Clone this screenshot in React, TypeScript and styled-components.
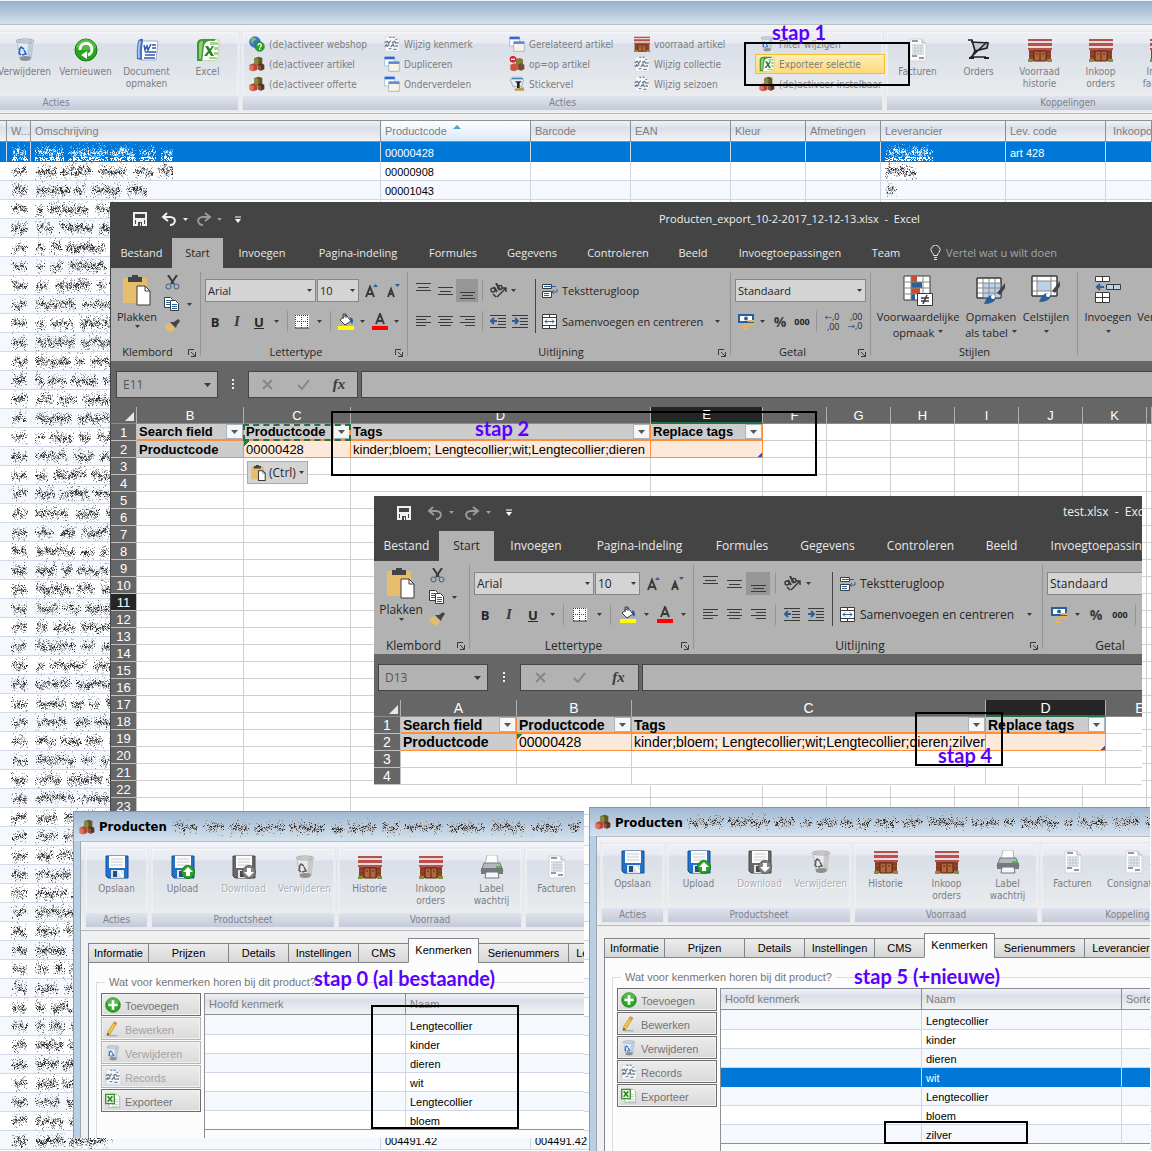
import React from 'react';
import styled, { createGlobalStyle, css } from 'styled-components';

const ui = `"Liberation Sans", Arial, sans-serif`;
const tahoma = `"DejaVu Sans Condensed", "DejaVu Sans", Tahoma, sans-serif`;
const segoe = `"Open Sans", "Segoe UI", sans-serif`;
const ink = '#3a3a3a';
const blue = '#2a6099';

const Global = createGlobalStyle`
  * { box-sizing: border-box; }
  body { margin: 0; background: #fff; font-family: ${ui}; font-size: 11px; }
  button, input, select { font: inherit; color: inherit; margin: 0; padding: 0; border: 0; background: none; border-radius: 0; }
  svg { display: block; flex: none; }
  table { border-collapse: separate; border-spacing: 0; table-layout: fixed; }
  th { text-align: left; font-weight: inherit; }
  td, th { padding: 0; }
`;

/* ---------- smudged-out text ---------- */

function random(seed: number) {
  let a = seed * 7919 + 13;
  return () => {
    a = (a + 0x6d2b79f5) | 0;
    let t = Math.imul(a ^ (a >>> 15), 1 | a);
    t = (t + Math.imul(t ^ (t >>> 7), 61 | t)) ^ t;
    return ((t ^ (t >>> 14)) >>> 0) / 4294967296;
  };
}

const tones = {
  dark: ['#333333', '#868686', '#c0c4ca'],
  light: ['#ffffff', '#9fd0f5', '#4fa3e6'],
};

interface SmudgeProps { w: number; h: number; seed: number; tone?: 'dark' | 'light'; loose?: number; single?: boolean }

function Smudge({ w, h, seed, tone = 'dark', loose = 0, single }: SmudgeProps) {
  const r = random(seed);
  const paths = ['', '', ''];
  let x = 0;
  while (x < w) {
    const word = single ? w : 10 + Math.floor(r() * 34);
    const tall = 4 + r();
    let lift = 0;
    for (let i = 0; i < word && x < w; i++, x++) {
      if (i % 3 === 0) lift = (r() - 0.5) * 4;
      const edge = Math.min(i + 1, word - i, 4) / 4;
      for (let y = 0; y < h; y++) {
        const d = Math.abs(y - h / 2 + lift) / tall;
        const fringe = tone === 'light' && y > h - 5 ? 0.4 : 0;
        const p = 0.72 * edge * Math.exp(-d * d * 1.1) + loose + fringe;
        if (r() < p) {
          const k = r() + d * 0.35;
          const level = fringe ? 0 : k < 0.4 ? 0 : k < 0.8 ? 1 : 2;
          paths[level] += `M${x} ${y}h1v1h-1z`;
        }
      }
    }
    x += 2 + Math.floor(r() * 4);
  }
  return (
    <svg width={w} height={h} viewBox={`0 0 ${w} ${h}`} shapeRendering="crispEdges" aria-hidden="true">
      {paths.map((d, i) => <path key={i} d={d} fill={tones[tone][i]} />)}
    </svg>
  );
}

/* ---------- icons of the product program ---------- */

type Art = { size?: number; faded?: boolean };
const Pic = ({ size = 24, faded, children }: Art & { children: React.ReactNode }) => (
  <svg width={size} height={size} viewBox="0 0 24 24" aria-hidden="true" filter={faded ? 'grayscale(1)' : undefined}>{children}</svg>
);

const Bin = (p: Art) => (
  <Pic {...p}>
    <path d="M4 3L7 21Q12 24 18 21L20 3Z" fill="#e3ebf4" stroke="#b3bfcc" />
    <path d="M15 5L14 21Q17 21 18 20L20 5Z" fill="#bccbdc" />
    <path d="M7 19Q12 17 18 19L17 22Q12 24 7 22Z" fill="#8d9094" />
    <ellipse cx="12" cy="3" rx="9" ry="2" fill="#f4f8fc" stroke="#9aa6b3" />
    <path d="M5 3h14" stroke="#8798a8" />
    <path d="M6 12l2-3 3 2M11 12l2 4-4 1M8 17l-2-2 1-3" fill="none" stroke="#2463c9" strokeWidth="1.6" />
  </Pic>
);
const Refresh = (p: Art) => (
  <Pic {...p}>
    <circle cx="12" cy="12" r="11" fill="#27a51c" stroke="#127a0d" />
    <path d="M2 10A10 9 0 0 1 22 10Q12 14 2 10Z" fill="#6fd05f" opacity=".6" />
    <path d="M6 12A6 6 0 1 1 14 17" fill="none" stroke="#fff" strokeWidth="3" />
    <path d="M13 13v8l-6-4z" fill="#fff" />
  </Pic>
);
const Word = (p: Art) => (
  <Pic {...p}>
    <path d="M7 3L23 3L21 22L6 22Z" fill="#fff" stroke="#9db0cf" />
    <path d="M3 3Q1 12 2 21L7 22Q6 12 8 1Q5 0 3 3Z" fill="#3d6cc0" />
    <path d="M5 3Q3 12 4 20" stroke="#a8c4f0" strokeWidth="2" fill="none" />
    <path d="M9 7l1 5 2-4 1 4 3-6" fill="none" stroke="#2b57ab" strokeWidth="1.5" />
    <path d="M17 7h4M17 10h4M10 14h11M10 17h10M9 20h11" stroke="#2d59ad" strokeWidth="1.4" />
  </Pic>
);
const Xl = (p: Art) => (
  <Pic {...p}>
    <path d="M7 2L23 2L22 22L6 23Z" fill="#fff" stroke="#b9d7ad" />
    <path d="M14 4h8v3h-8zM18 9h4v3h-4zM18 14h4v3h-4zM13 19h8v2h-8z" fill="#a5d58e" />
    <path d="M1 5Q2 1 6 1L20 1L18 3Q9 2 8 8L6 23L1 23Z" fill="#3f9a31" />
    <path d="M3 7Q3 3 7 3L5 21L3 21Z" fill="#8fd07b" />
    <path d="M9 8h3l2 3 2-3h2l-3 5 3 5h-3l-2-3-2 3h-3l4-5z" fill="#2d8427" />
  </Pic>
);
const XlPage = (p: Art) => (
  <Pic {...p}>
    <path d="M6 2h12l4 4v16H6z" fill="#fff" stroke="#8aa08a" />
    <path d="M14 10h6M14 13h6M10 17h10M10 20h10" stroke="#9bb79b" />
    <path d="M1 2h13v14H1z" fill="#e6f4e0" stroke="#3c9134" strokeWidth="2" />
    <path d="M4 5l7 8M11 5l-7 8" stroke="#2c8326" strokeWidth="2.4" />
  </Pic>
);
const Globe = (p: Art) => (
  <Pic {...p}>
    <circle cx="9" cy="9" r="8" fill="#3a79c8" stroke="#2a5b99" />
    <path d="M4 3Q9 1 11 5L7 8L5 12Q1 9 4 3ZM12 9l4 1-2 4-3-2z" fill="#7db97a" />
    <circle cx="16" cy="16" r="7" fill="#2ba329" stroke="#167a14" />
    <path d="M13.500 14Q14 11.500 16 11.500T18.500 14Q18 16 16 17M16 18.500v2" fill="none" stroke="#fff" strokeWidth="2" />
  </Pic>
);
const Blocks = (p: Art) => (
  <Pic {...p}>
    <path d="M8 3l7-2 5 2v9l-7 2-5-2z" fill="#5f5a26" />
    <path d="M8 3l6 1v9l-6-1z" fill="#8f8740" />
    <path d="M1 13l6-2 5 2v8l-6 2-5-2z" fill="#b54835" />
    <path d="M1 13l6 2v7l-6-1z" fill="#e0735c" />
    <path d="M13 13l5-2 5 2v7l-5 2-5-2z" fill="#5d3222" />
    <path d="M13 13l5 2v7l-5-2z" fill="#85533b" />
  </Pic>
);
const StopBlocks = (p: Art) => (
  <Pic {...p}>
    <path d="M10 4l6-1 5 2v8l-6 2-5-2z" fill="#857c38" />
    <path d="M2 13l6-2 5 2v8l-6 2-5-2z" fill="#c9543e" />
    <path d="M13 13l5-2 5 2v7l-5 2-5-2z" fill="#7a4a34" />
    <circle cx="6" cy="5" r="5" fill="#d8202a" />
    <path d="M3 5h6" stroke="#fff" strokeWidth="2" />
  </Pic>
);
const Scribble = (p: Art) => (
  <Pic {...p}>
    <path d="M2 1h17l4 4v18H2z" fill="#f7f9fb" stroke="#d4d8dd" />
    <path d="M8 2h3M13 2h3M17 5h3M7 19h4M14 20h5" stroke="#6c87a8" strokeWidth="2" />
    <path d="M1 10l4-2 2 3 3-4M12 10l4-2 2 3 4-1M1 15h4l3-2M10 16l3-3 3 3M17 15h4M4 12v2M14 11v2" fill="none" stroke="#6e7d92" strokeWidth="2" />
  </Pic>
);
const Windows = (p: Art) => (
  <Pic {...p}>
    <path d="M1 2h15v13H1z" fill="#fff" stroke="#8aa7d6" />
    <path d="M1 1h15v4H1z" fill="#2f66d2" />
    <path d="M7 9h16v14H7z" fill="#f7f3e4" stroke="#8fa3bf" />
    <path d="M7 8h16v4H7z" fill="#5f8ddc" />
  </Pic>
);
const Sticker = (p: Art) => (
  <Pic {...p}>
    <path d="M2 6L5 2H19L22 6L19 16H6Z" fill="#e8ecf0" stroke="#7f98ad" />
    <path d="M4 4h17" stroke="#4b87b8" strokeWidth="2" />
    <path d="M9 8h10l-3 3v7h-4v-7z" fill="#262626" />
    <path d="M8 19l14-2 1 5H9z" fill="#c39a4a" />
  </Pic>
);
const Store = (p: Art) => (
  <Pic {...p}>
    <path d="M1 9h22v14H1z" fill="#93452c" />
    <path d="M1 14h22M1 18h22" stroke="#7a3521" />
    <path d="M0 1h24v10H0z" fill="#e6dbda" />
    <path d="M0 1h24v2H0zM0 5h24v3H0zM0 10h24v2H0z" fill="#b8504d" />
    <path d="M6 13h12v10H6z" fill="#b1683c" stroke="#5a2514" />
    <path d="M12 13v10M9 15v2M15 15v2" stroke="#5a2514" />
    <path d="M0 21h5v3H0zM19 21h5v3h-5z" fill="#84903c" />
  </Pic>
);
const Page = (p: Art) => (
  <Pic {...p}>
    <path d="M4 1h12l4 4v18H4z" fill="#fdfdfd" stroke="#cfd3d8" />
    <path d="M16 1v4h4" fill="#dfe3e8" stroke="#b5bac0" />
    <path d="M6 3h6M6 18h5M13 20h5" stroke="#777" strokeWidth="1.500" />
    <path d="M6 7h12v9H6z" fill="#e9eef2" />
    <path d="M6 7h12M6 10h12M6 13h12M6 16h12M9 7v9M12 7v9M15 7v9" stroke="#bcc7cf" />
  </Pic>
);
const Cart = (p: Art) => (
  <Pic {...p}>
    <path d="M4 4l16 1v5L8 13z" fill="#c4c8d0" />
    <path d="M1 2h4l3 11M4 4l17 1-1 5L8 13l-3 6h14M20 4L3 20" fill="none" stroke="#222" strokeWidth="1.700" />
    <path d="M2 20h5M17 20h5" stroke="#222" strokeWidth="2" />
  </Pic>
);
const Disk = ({ badge, ...p }: Art & { badge?: 'up' | 'down' }) => (
  <Pic {...p}>
    <path d="M1 1h22v22H3l-2-2z" fill="#2471c8" stroke="#164f96" />
    <path d="M4 1h16v12H4z" fill="#fbfbfb" /><path d="M6 4h12M6 7h12M6 10h12" stroke="#c8ccd2" />
    <path d="M6 15h13v8H6z" fill="#dfe3e8" /><path d="M8 16h4v6H8z" fill="#1f4f87" /><path d="M14 16l4 6" stroke="#fff" strokeWidth="2" />
    {badge && <circle cx="17" cy="17" r="6.500" fill="#2ba329" stroke="#177c15" />}
    {badge === 'up' && <path d="M17 12l5 5h-3v4h-4v-4h-3z" fill="#fff" />}
    {badge === 'down' && <path d="M17 22l5-5h-3v-4h-4v4h-3z" fill="#fff" />}
  </Pic>
);
const Printer = (p: Art) => (
  <Pic {...p}>
    <path d="M7 0h10l1 9H5z" fill="#fdfdfd" stroke="#b4b7ba" />
    <path d="M4 8h16l3 8H1z" fill="#b4b9bf" stroke="#75797d" /><path d="M1 13h22v6H1z" fill="#737980" />
    <path d="M16 12h5" stroke="#57b54c" strokeWidth="2" />
    <path d="M6 17h12l1 6H5z" fill="#f5f6f7" stroke="#777" />
  </Pic>
);
const Plus = (p: Art) => (
  <Pic {...p}>
    <circle cx="12" cy="12" r="11" fill="#2ca526" stroke="#16770f" />
    <path d="M3 9A9 8 0 0 1 21 9Q12 13 3 9Z" fill="#7cd070" opacity=".5" />
    <path d="M12 5v14M5 12h14" stroke="#fff" strokeWidth="4" />
  </Pic>
);
const Pencil = (p: Art) => (
  <Pic {...p}>
    <path d="M5 22h14" stroke="#a9adb3" strokeWidth="2" />
    <path d="M14 1l4 2L8 19l-5 3 1-6z" fill="#f2c83e" stroke="#b88a2c" />
    <path d="M14 1l4 2-2 3-4-2z" fill="#d98878" /><path d="M3 22l1-4 3 2z" fill="#4a4a4a" />
  </Pic>
);

/* ---------- icons of the spreadsheet ---------- */

const Glyph = ({ w = 16, h = 16, box, children }: { w?: number; h?: number; box?: string; children: React.ReactNode }) => (
  <svg width={w} height={h} viewBox={box || `0 0 ${w} ${h}`} aria-hidden="true" fill="none" stroke={ink}>{children}</svg>
);
const Caret = ({ color = ink }: { color?: string }) => (
  <Glyph w={5} h={3}><path d="M0 0h5L2.500 3z" fill={color} stroke="none" /></Glyph>
);
const SaveIcon = () => <Glyph w={14} h={14}><path d="M1 1h12v12H1zM1 7h12" stroke="#f0f0f0" strokeWidth="2" /><path d="M3 8h8v6H3z" fill="#f0f0f0" stroke="none" /><path d="M5 10h4v4H5z" fill="#444" stroke="none" /><path d="M7 11h1v3H7z" fill="#f0f0f0" stroke="none" /></Glyph>;
const Undo = ({ color }: { color: string }) => <Glyph w={16} h={14}><path d="M6 1L2 5l5 4M2 5h7c7 0 6 8 0 8" stroke={color} strokeWidth="2" /></Glyph>;
const Redo = () => <Glyph w={16} h={14}><path d="M9 1l5 4-5 4M14 5H7c-7 0-6 8 0 8" stroke="#9a9a9a" strokeWidth="2" /></Glyph>;
const More = () => <Glyph w={6} h={7}><path d="M0 1h6" stroke="#fff" /><path d="M0 3h6L3 7z" fill="#fff" stroke="none" /></Glyph>;
const Paste = ({ small }: { small?: boolean }) => (
  <Glyph w={small ? 15 : 28} h={small ? 16 : 31} box="0 0 28 31">
    <path d="M0 3h24v25H0z" fill="#e6bd6c" stroke="none" /><path d="M5 2h4V0h6v2h4v5H5z" fill="#444" stroke="none" />
    <path d="M14 11h8l5 5v14H14z" fill="#fff" strokeWidth={small ? 2 : 1} /><path d="M22 11v5h5" />
  </Glyph>
);
const Scissors = () => <Glyph w={15} h={15}><path d="M3 0l6 9M12 0L6 9" strokeWidth="2" /><circle cx="3.500" cy="11.500" r="2.500" stroke={blue} /><circle cx="11.500" cy="11.500" r="2.500" stroke={blue} /></Glyph>;
const Copy = () => <Glyph w={16} h={14}><path d="M.5 .5h6l2 2v8h-8z" fill="#fff" /><path d="M6.500 3.500h5l3 3v7h-8z" fill="#fff" /><path d="M2 3.500h4M2 5.500h4M2 7.500h4M8 7.500h5M8 9.500h5M8 11.500h5" stroke={blue} /></Glyph>;
const Brush = () => <Glyph w={16} h={14}><path d="M0 7l5-3 6 6-5 4z" fill="#e6bd6c" stroke="none" /><path d="M6 3l6 6 1-3 3-4-2-2-4 3z" fill="#444" stroke="none" /></Glyph>;
const GrowA = ({ down }: { down?: boolean }) => (
  <Glyph w={13} h={14}><path d={down ? 'M1 13l3-8 3 8M2 10h4' : 'M1 13L5 3l4 10M2 10h6'} strokeWidth="2" /><path d={down ? 'M8 0h5l-2.500 3z' : 'M8 3h5L10.500 0z'} fill={blue} stroke="none" /></Glyph>
);
const Borders = () => <Glyph w={14} h={14}><path d="M0 0h14v13H0z" fill="#fff" stroke="none" /><path d="M0 .5h14M0 6.500h14M.5 0v13M6.500 0v13M12.500 0v13" strokeDasharray="1 1" /><path d="M0 13h14" /></Glyph>;
const Fill = () => <Glyph w={17} h={17}><path d="M3 7l6-5 5 6-6 4z" fill="#fff" /><path d="M6 6V1h3v4" /><path d="M13 4q5 2 2 7l-2-3z" fill={blue} stroke="none" /><path d="M1 13h16v4H1z" fill="#ff0" stroke="none" /></Glyph>;
const FontColor = () => <Glyph w={17} h={17}><path d="M5 11l4-10 4 10M6 8h6" strokeWidth="2" /><path d="M1 13h16v4H1z" fill="#f00" stroke="none" /></Glyph>;
const Lines = ({ kind }: { kind: 'top' | 'mid' | 'low' | 'left' | 'center' | 'right' }) => {
  const d = {
    top: 'M0 .5h15M2 4.500h11M0 7.500h15', mid: 'M0 4.500h15M2 8.500h11M0 11.500h15', low: 'M0 9.500h15M2 12.500h11M0 15.500h15',
    left: 'M0 2.500h15M0 5.500h10M0 8.500h15M0 11.500h10', center: 'M0 2.500h15M2 5.500h11M0 8.500h15M2 11.500h11', right: 'M0 2.500h15M5 5.500h10M0 8.500h15M5 11.500h10',
  }[kind];
  return <Glyph w={15} h={16}><path d={d} /></Glyph>;
};
const Orient = () => <Glyph w={17} h={15}><circle cx="3" cy="7" r="2" strokeWidth="1.500" /><path d="M4 4l3 5M6 0l4 7" strokeWidth="2" /><circle cx="10" cy="4.500" r="2" strokeWidth="1.500" /><path d="M7 14l9-9M12 5h4v4M3 11l3 3" strokeWidth="1.500" /></Glyph>;
const Indent = ({ back }: { back?: boolean }) => <Glyph w={16} h={14}><path d="M0 .5h16M8 3.500h8M8 6.500h8M8 9.500h8M0 12.500h16" /><path d={back ? 'M4 3L1 6l3 3M1 6h6' : 'M3 3l3 3-3 3M0 6h6'} stroke={blue} strokeWidth="2" /></Glyph>;
const Wrap = () => <Glyph w={16} h={16}><path d="M.5 1.500h9v4h-9zM.5 8.500h9v6h-9z" fill="#fff" /><path d="M2 3.500h12M2 10.500h5M2 12.500h5" stroke={blue} /><path d="M15 6v3h-5M12 7l-2 2 2 2" stroke={blue} /></Glyph>;
const Merge = () => <Glyph w={16} h={15}><path d="M.5 .5h14v14H.5zM.5 3.500h14M.5 11.500h14M7.500 0v3M7.500 12v3" fill="#fff" /><path d="M3 7.500h9M5 5.500l-2 2 2 2M10 5.500l2 2-2 2" stroke={blue} /></Glyph>;
const Money = () => <Glyph w={17} h={16}><path d="M0 0h16v9H0z" fill={blue} stroke="none" /><path d="M2 2h12v5H2z" fill="#fff" stroke="none" /><circle cx="8" cy="4.500" r="2" fill={blue} stroke="none" /><path d="M10 7h6M10 10h6M4 12h7M5 15h5" stroke="#e9b25c" strokeWidth="2" /></Glyph>;
const Launcher = () => <Glyph w={8} h={8}><path d="M.5 6V.5H6M3 3l4 4M7.500 3v4.500H3" /></Glyph>;
const Conditional = () => (
  <Glyph w={30} h={31}><path d="M1 1h26v24H1z" fill="#fff" /><path d="M8 1h6v6H8zM8 13h9v6H8z" fill="#c54f2c" stroke="none" /><path d="M8 7h11v6H8zM8 19h4v6H8z" fill={blue} stroke="none" /><path d="M8 1v24M20 1v24M1 7h26M1 13h26M1 19h26" stroke="#888" /><path d="M14.500 18.500h15v12h-15z" fill="#fff" /><path d="M18 23h8M18 26h8M24 20l-4 9" strokeWidth="1.500" /></Glyph>
);
const PaintBrush = () => <><path d="M29 8l-8 10 3 2 5-7z" fill="#444" stroke="none" /><path d="M8 29q3-9 9-9l3 3q-2 6-12 6z" fill={blue} stroke="none" /><circle cx="17" cy="22" r="2" fill="#fff" stroke="none" /></>;
const FormatTable = () => <Glyph w={30} h={31}><path d="M1 3h24v20H1z" fill="#fff" /><path d="M7 8h18v15H7z" fill="#bdd0ea" stroke="none" /><path d="M7 3v20M13 3v20M19 3v20M1 8h24M1 13h24M1 18h24" stroke="#888" /><path d="M1 3h24v20H1z" /><PaintBrush /></Glyph>;
const CellStyles = () => <Glyph w={30} h={31}><path d="M1 1h25v20H1z" fill="#fff" /><path d="M6 6h14v10H6z" fill="#bdd0ea" stroke="none" /><path d="M6 1v20M20 1v20M1 6h25M1 16h25" stroke="#888" /><path d="M1 1h25v20H1z" /><g transform="translate(0 -2)"><PaintBrush /></g></Glyph>;
const InsertCells = () => <Glyph w={26} h={31}><path d="M.5 1.500h14v5H.5zM7.500 1v5M.5 17.500h14v10H.5zM7.500 17v10M.5 22.500h14" fill="#fff" /><path d="M11.500 9.500h14v5h-14zM18.500 9v5" fill="#bdd0ea" /><path d="M9 12H2M5 9l-3 3 3 3" stroke={blue} strokeWidth="2" /></Glyph>;
const Bulb = () => <Glyph w={11} h={15}><path d="M3.500 10.500q0-2-1.500-3a4.500 4.500 0 1 1 7 0q-1.500 1-1.500 3zM4 12.500h3M4 14.500h3" stroke="#e8e8e8" /></Glyph>;

/* ---------- product ribbon ---------- */

const RibbonBar = styled.div`
  display: flex; gap: 1px; height: 90px; padding: 5px 3px 3px 3px; overflow: hidden;
  border-top: 1px solid #b9bcc2; border-bottom: 1px solid #b4b8be;
  background: linear-gradient(#f3f4f8 0, #e7eaf1 18px, #d9dee8 19px, #e6e9ec 60px, #f1f2f2 88px);
`;
const RibbonGroup = styled.section<{ $w: number; $end?: boolean }>`
  flex: none; width: ${p => p.$w}px; height: 82px; display: flex; flex-direction: column;
  border: 2px solid #e9ebef; box-shadow: inset 0 0 0 1px rgba(255,255,255,.35);
  ${p => p.$end && css`margin-left: -131px; align-items: flex-end;`}
`;
const GroupBody = styled.div`flex: 1; display: flex; min-width: 0;`;
const GroupName = styled.div`
  align-self: stretch; height: 14px; line-height: 14px; text-align: center; color: #7e838c;
  font-family: ${tahoma}; font-size: 10px; background: linear-gradient(#dfe3ee, #c5cad8);
`;
const BigButton = styled.button`
  flex: none; width: 61px; display: flex; flex-direction: column; align-items: center; padding-top: 6px;
  font-family: ${tahoma}; font-size: 10px; line-height: 12px; color: #7c7e82; white-space: pre; gap: 4px;
  &:disabled { color: #adb0b5; text-shadow: 1px 1px #fff; }
`;
const SmallGrid = styled.div`
  display: grid; grid-auto-flow: column; grid-template-rows: repeat(3, 20px);
  grid-template-columns: 135px 125px 125px 125px 130px; padding: 2px 0 0 2px; height: 62px;
`;
const SmallButton = styled.button<{ $hot?: boolean }>`
  display: flex; align-items: center; gap: 4px; padding-left: 3px; white-space: nowrap; width: 130px;
  font-family: ${tahoma}; font-size: 10px; color: #7c7e82; border: 1px solid transparent;
  ${p => p.$hot && css`border-color: #f5bf2e; background: linear-gradient(#ffeeb6, #fdd97a);`}
`;

/* ---------- product program, back window ---------- */

const Desktop = styled.main`position: relative; min-height: 100vh; overflow: hidden; background: #fff;`;
const BackTitle = styled.header`height: 24px; border-top: 1px solid #eef2f6; background: linear-gradient(#96b0ca, #d3e0ed);`;
const Gap = styled.div`height: 6px; background: #f0f0f0;`;
const DataTable = styled.table`
  width: 100%; font-size: 11px; color: #000;
  th { height: 22px; padding-left: 4px; color: #7c7e82; white-space: nowrap; overflow: hidden;
    border: solid #8b8f96; border-width: 1px 1px 1px 0;
    background: linear-gradient(#eef0f5 0, #e3e7ee 5px, #d9dee8 6px, #f1f2f3 100%); }
  td { height: 19px; line-height: 16px; padding: 2px 0 0 4px; overflow: hidden; white-space: nowrap;
    border: solid #cfd7e6; border-width: 0 1px 1px 0; background: #fff; }
  tbody tr:nth-child(odd) td { background: #f5f9fd; }
  tbody tr:first-child td { height: 20px; }
  tbody tr.on td { background: #0078d7; color: #fff; border-bottom-color: #0078d7; }
  svg { max-width: none; }
`;
const StockTable = styled(DataTable)`
  tbody tr:not(.on) td:nth-child(-n+2) { border-right-color: transparent; }
  td:nth-child(-n+3), td:nth-child(9) { padding-top: 0; }
`;
const SortedTh = styled.th`
  && { background: linear-gradient(#fff, #d9e9f7); }
  svg { display: inline-block; vertical-align: 6px; margin-left: 6px; }
`;

const backCols = [7, 24, 350, 150, 100, 100, 75, 75, 125, 100];
const backRows = Array.from({ length: 53 }, (_, i) => i);
const codes: Record<number, string> = { 0: '00000428', 1: '00000908', 2: '00001043', 52: '004491.42' };

function BackWindow() {
  return (
    <>
      <BackTitle />
      <RibbonBar>
        <RibbonGroup $w={368} $end>
          <GroupBody>
            <BigButton><Bin />Verwijderen</BigButton>
            <BigButton><Refresh />Vernieuwen</BigButton>
            <BigButton><Word />{'Document\nopmaken'}</BigButton>
            <BigButton><Xl />Excel</BigButton>
          </GroupBody>
          <GroupName>Acties</GroupName>
        </RibbonGroup>
        <RibbonGroup $w={643}>
          <GroupBody>
            <SmallGrid>
              <SmallButton><Globe size={16} />(de)activeer webshop</SmallButton>
              <SmallButton><Blocks size={16} />(de)activeer artikel</SmallButton>
              <SmallButton><Blocks size={16} />(de)activeer offerte</SmallButton>
              <SmallButton><Scribble size={16} />Wijzig kenmerk</SmallButton>
              <SmallButton><Windows size={16} />Dupliceren</SmallButton>
              <SmallButton><Windows size={16} />Onderverdelen</SmallButton>
              <SmallButton><Windows size={16} />Gerelateerd artikel</SmallButton>
              <SmallButton><StopBlocks size={16} />op=op artikel</SmallButton>
              <SmallButton><Sticker size={16} />Stickervel</SmallButton>
              <SmallButton><Store size={16} />voorraad artikel</SmallButton>
              <SmallButton><Scribble size={16} />Wijzig collectie</SmallButton>
              <SmallButton><Scribble size={16} />Wijzig seizoen</SmallButton>
              <SmallButton><Bin size={16} />Filter wijzigen</SmallButton>
              <SmallButton $hot><Xl size={16} />Exporteer selectie</SmallButton>
              <SmallButton><Blocks size={16} />(de)activeer instelbaar</SmallButton>
            </SmallGrid>
          </GroupBody>
          <GroupName>Acties</GroupName>
        </RibbonGroup>
        <RibbonGroup $w={366}>
          <GroupBody>
            <BigButton><Page />Facturen</BigButton>
            <BigButton><Cart />Orders</BigButton>
            <BigButton><Store />{'Voorraad\nhistorie'}</BigButton>
            <BigButton><Store />{'Inkoop\norders'}</BigButton>
            <BigButton><Store />{'Inkoop\nfacturen'}</BigButton>
          </GroupBody>
          <GroupName>Koppelingen</GroupName>
        </RibbonGroup>
      </RibbonBar>
      <Gap />
      <StockTable>
        <colgroup>{backCols.map((w, i) => <col key={i} width={w} />)}<col /></colgroup>
        <thead>
          <tr>
            <th /><th>W...</th><th>Omschrijving</th>
            <SortedTh>Productcode<Glyph w={8} h={4}><path d="M0 4h8L4 0z" fill="#4aa3c9" stroke="none" /></Glyph></SortedTh>
            <th>Barcode</th><th>EAN</th><th>Kleur</th><th>Afmetingen</th><th>Leverancier</th><th>Lev. code</th><th>&nbsp;Inkooporder</th>
          </tr>
        </thead>
        <tbody>
          {backRows.map(i => (
            <tr key={i} className={i === 0 ? 'on' : undefined}>
              <td />
              <td><Smudge w={17} h={18} seed={i + 300} tone={i ? 'dark' : 'light'} loose={0.03} single /></td>
              <td><Smudge w={i < 2 ? 138 : i < 3 ? 112 : 78} h={18} seed={i + 1} tone={i ? 'dark' : 'light'} loose={0.05} /></td>
              <td>{codes[i]}</td>
              <td>{i === 52 ? codes[i] : ''}</td>
              <td /><td /><td />
              <td>{i < 3 && <Smudge w={i === 0 ? 48 : i === 1 ? 32 : 12} h={18} seed={i + 90} tone={i ? 'dark' : 'light'} loose={0.04} single />}</td>
              <td>{i === 0 ? 'art 428' : ''}</td>
              <td />
            </tr>
          ))}
        </tbody>
      </StockTable>
    </>
  );
}

/* ---------- spreadsheet window ---------- */

type Wide = { $wide?: boolean };
const grow = (n: number, wide?: boolean) => Math.round(wide ? n * 1.08 : n);

const SheetWindow = styled.section<Wide>`
  position: absolute; overflow: hidden; background: #fff; color: #262626;
  font-family: ${segoe}; font-size: ${p => (p.$wide ? 12 : 11)}px; white-space: nowrap;
  ${p => p.$wide
    ? css`left: 374px; top: 496px; width: 768px; height: 290px;`
    : css`left: 110px; top: 202px; right: 0; border-left: 1px solid #444;`}
`;
const SheetTitle = styled.header<Wide>`
  display: flex; align-items: center; height: ${p => (p.$wide ? 35 : 36)}px; padding: 0 0 2px 22px; background: #444; color: #f0f0f0;
  > span { margin-bottom: 2px; }
`;
const Slot = styled.div<{ $w: number }>`
  flex: none; width: ${p => p.$w}px; display: flex; align-items: center; justify-content: center;
`;
const IconSlot = styled.button<{ $w: number; $on?: boolean }>`
  flex: none; width: ${p => p.$w}px; display: flex; align-items: center; justify-content: center;
  height: 23px; font-size: 13px; ${p => p.$on && css`background: #969696;`}
`;
const MenuTabs = styled.nav`display: flex; height: 30px; background: #444; color: #e8e8e8;`;
const MenuTab = styled.button<{ $w: number; $on?: boolean }>`
  flex: none; width: ${p => p.$w}px; height: 30px; padding-bottom: 2px;
  ${p => p.$on && css`background: #b2b2b2; color: #262626;`}
`;
const Tell = styled.label`display: flex; align-items: center; gap: 5px; padding: 0 0 2px 15px; color: #a8a8a8; input { width: 140px; &::placeholder { color: #a8a8a8; } }`;
const Tools = styled.div`display: flex; height: 93px; background: #b2b2b2; overflow: hidden;`;
const ToolGroup = styled.section<{ $w: number }>`
  flex: none; width: ${p => p.$w}px; display: flex; flex-direction: column; padding-top: 7px; position: relative;
  &::after { content: ''; position: absolute; right: 0; top: 4px; bottom: 5px; width: 1px; background: #949494; }
`;
const ToolRow = styled.div<{ $pad?: number }>`display: flex; align-items: center; height: 31px; padding-left: ${p => p.$pad || 0}px;`;
const ToolName = styled.footer`
  display: flex; height: 24px; padding: 7px 5px 0 0;
  span { flex: 1; text-align: center; padding-right: 4px; } span:only-child { padding: 0 0 0 5px; } svg { margin-top: 5px; }
`;
const Bar = styled.i<{ $dark?: boolean }>`width: 1px; height: 21px; background: ${p => (p.$dark ? '#444' : '#949494')};`;
const Pick = styled.span<{ $w: number }>`
  position: relative; flex: none; width: ${p => p.$w}px; height: 23px; margin-right: 1px;
  select { appearance: none; width: 100%; height: 23px; padding-left: 2px; border: 1px solid #868686; background: #d4d4d4; }
  svg { position: absolute; right: 4px; top: 10px; pointer-events: none; }
`;
const Stacked = styled.button<{ $w: number }>`
  flex: none; width: ${p => p.$w}px; height: 62px; display: flex; flex-direction: column; align-items: center; line-height: 16px;
  svg:first-child { height: 31px; margin-bottom: 3px; } > span { display: flex; align-items: center; gap: 4px; min-height: 16px; }
`;
const TextTool = styled.button<{ $w: number }>`display: flex; align-items: center; gap: 4px; width: ${p => p.$w}px; height: 24px;`;
const Halves = styled.div`display: flex;`;
const Column = styled.div`display: flex; flex-direction: column;`;
const PasteSide = styled.div<Wide>`display: grid; grid-template: repeat(3, 22px) / 18px ${p => (p.$wide ? 17 : 16)}px; place-items: center; margin-top: -4px; height: 62px;`;
const Tall = styled.div`display: flex; align-items: center; height: 62px; i { height: 54px; }`;
const FormulaBar = styled.div<Wide>`
  display: flex; height: 46px; padding: 10px 0 9px ${p => (p.$wide ? 4 : 5)}px; background: #666; color: #555;
`;
const Field = styled.div<{ $w: number }>`
  flex: none; width: ${p => p.$w}px; height: 27px; display: flex; align-items: center; border: 1px solid #444; background: #b2b2b2;
  input { flex: 1; min-width: 0; padding-left: 6px; font-size: 12px; } > svg { margin-right: 6px; }
`;
const FormulaInput = styled.input`&& { flex: 1; min-width: 0; height: 27px; margin-left: 3px; border: 1px solid #444; border-right: 0; background: #b2b2b2; }`;
const Fx = styled.em`font: italic bold 15px "Liberation Serif", serif; color: #3a3a3a;`;
const Percent = styled.b`font-size: 14px; color: #3a3a3a;`;
const Zeros = styled.b`font-size: 9px;`;
const Decimals = styled.span`display: grid; font-size: 9px; line-height: 9px; text-align: right; u { color: ${blue}; text-decoration: none; font-family: "DejaVu Sans"; }`;
const Corner = styled.svg.attrs({ width: 9, height: 9, viewBox: '0 0 9 9' })`&& { margin: 3px 2px 0 auto; }`;

const Grid = styled.table<Wide>`
  width: 100%; font-family: ${ui}; font-size: ${p => (p.$wide ? 14 : 13)}px; line-height: 15px; color: #000;
  td, th { height: 17px; border: solid #d0d0d0; border-width: 0 1px 1px 0; white-space: nowrap; }
  thead th { background: #666; color: #fff; text-align: center; border-color: #8c8c8c #b0b0b0; }
  thead th.on { background: #252525; border-bottom: 2px solid #217346; line-height: 14px; }
  tbody th { background: #666; color: #fff; text-align: center; border-color: #c0c0c0; }
  tbody th.on { background: #252525; }
`;
const HeadCell = styled.td<{ $ants?: boolean }>`
  && { background: #ccc; font-weight: bold; border-color: #fb8f3c; border-bottom-width: 2px; position: relative; }
  > div { display: flex; justify-content: space-between; height: 15px; padding-left: 2px; line-height: 16px; }
  button { width: 17px; height: 15px; display: grid; place-items: center; background: #f4f6f8; border: 1px solid #a9b3bd; }
  ${p => p.$ants && css`&::after { content: ''; position: absolute; inset: 0 -1px -2px -1px; border: 2px dashed #217346; pointer-events: none; }`}
`;
const TagCell = styled.td<{ $grey?: boolean; $flag?: boolean; $corner?: boolean }>`
  && { padding-left: 2px; background: ${p => (p.$grey ? '#ccc' : '#fde9d9')}; font-weight: ${p => (p.$grey ? 'bold' : 'normal')}; border-color: #fb8f3c;
    ${p => p.$flag && css`background: linear-gradient(135deg, #1c8a2c 4px, transparent 4px), #fde9d9;`}
    ${p => p.$corner && css`background: linear-gradient(315deg, #4757b5 3px, transparent 3px), #fde9d9;`}
  }
`;
const PasteOptions = styled.button`
  && { position: absolute; left: 136px; top: 259px; width: 61px; height: 23px; display: flex; align-items: center; gap: 3px; padding-left: 3px;
    background: #d4d4d4; border: 1px solid #aaa; font-size: 12px; }
`;

interface SheetProps {
  wide?: boolean; file: string; titleGap: number; cell: string; letters: string[]; widths: number[];
  rows: number; tags: string; active: string; activeRow?: number; children?: React.ReactNode;
}

const heads = ['Search field', 'Productcode', 'Tags', 'Replace tags'];

function Sheet({ wide, file, titleGap, cell, letters, widths, rows, tags, active, activeRow, children }: SheetProps) {
  const s = (n: number) => grow(n, wide);
  return (
    <SheetWindow $wide={wide} aria-label={file}>
      <SheetTitle $wide={wide}>
        <Slot $w={s(14)}><SaveIcon /></Slot>
        <Slot $w={s(14)} />
        <Slot $w={s(16)}><Undo color={wide ? '#9a9a9a' : '#f0f0f0'} /></Slot>
        <Slot $w={s(16)}><Caret color={wide ? '#9a9a9a' : '#f0f0f0'} /></Slot>
        <Slot $w={s(22)}><Redo /></Slot>
        <Slot $w={s(8)}><Caret color="#9a9a9a" /></Slot>
        <Slot $w={s(30)}><More /></Slot>
        <Slot $w={titleGap} />
        <span>{file}&nbsp; -&nbsp; Excel</span>
      </SheetTitle>
      <MenuTabs>
        <MenuTab $w={wide ? 65 : 61}>Bestand</MenuTab>
        <MenuTab $w={s(51)} $on>Start</MenuTab>
        <MenuTab $w={s(78)}>Invoegen</MenuTab>
        <MenuTab $w={s(114)}>Pagina-indeling</MenuTab>
        <MenuTab $w={s(76)}>Formules</MenuTab>
        <MenuTab $w={s(82)}>Gegevens</MenuTab>
        <MenuTab $w={s(90)}>Controleren</MenuTab>
        <MenuTab $w={s(60)}>Beeld</MenuTab>
        <MenuTab $w={s(134)}>Invoegtoepassingen</MenuTab>
        {!wide && <MenuTab $w={58}>Team</MenuTab>}
        {!wide && <Tell><Bulb /><input placeholder="Vertel wat u wilt doen" aria-label="Vertel wat u wilt doen" /></Tell>}
      </MenuTabs>
      <Tools>
        <ToolGroup $w={wide ? 96 : 90}>
          <Halves>
            <Stacked $w={wide ? 54 : 52}><Paste /><span>Plakken</span><Caret /></Stacked>
            <PasteSide $wide={wide}><Scissors /><i /><Copy /><Caret /><Brush /><i /></PasteSide>
          </Halves>
          <ToolName><span>Klembord</span><Launcher /></ToolName>
        </ToolGroup>
        <ToolGroup $w={s(207)}>
          <ToolRow $pad={4}>
            <Pick $w={s(111)}><select aria-label="Lettertype"><option>Arial</option></select><Caret /></Pick>
            <Pick $w={s(42)}><select aria-label="Grootte"><option>10</option></select><Caret /></Pick>
            <IconSlot $w={s(23)} aria-label="Groter"><GrowA /></IconSlot>
            <IconSlot $w={s(21)} aria-label="Kleiner"><GrowA down /></IconSlot>
          </ToolRow>
          <ToolRow $pad={3}>
            <IconSlot $w={s(22)}><b>B</b></IconSlot>
            <IconSlot $w={s(22)}><Fx>I</Fx></IconSlot>
            <IconSlot $w={s(22)}><b><u>U</u></b></IconSlot>
            <Slot $w={s(13)}><Caret /></Slot>
            <Slot $w={s(8)}><Bar /></Slot>
            <IconSlot $w={s(22)} aria-label="Randen"><Borders /></IconSlot>
            <Slot $w={s(13)}><Caret /></Slot>
            <Slot $w={s(8)}><Bar /></Slot>
            <IconSlot $w={s(23)} aria-label="Opvulkleur"><Fill /></IconSlot>
            <Slot $w={s(11)}><Caret /></Slot>
            <IconSlot $w={s(23)} aria-label="Tekstkleur"><FontColor /></IconSlot>
            <Slot $w={s(11)}><Caret /></Slot>
          </ToolRow>
          <ToolName><span>Lettertype</span><Launcher /></ToolName>
        </ToolGroup>
        <ToolGroup $w={s(323)}>
          <Halves>
            <Column>
              <ToolRow $pad={4}>
                <IconSlot $w={s(22)} aria-label="Boven"><Lines kind="top" /></IconSlot>
                <IconSlot $w={s(22)} aria-label="Midden"><Lines kind="mid" /></IconSlot>
                <IconSlot $w={s(22)} aria-label="Onder" $on><Lines kind="low" /></IconSlot>
                <Slot $w={s(9)}><Bar /></Slot>
                <IconSlot $w={s(22)} aria-label="Stand"><Orient /></IconSlot>
                <Slot $w={s(8)}><Caret /></Slot>
              </ToolRow>
              <ToolRow $pad={4}>
                <IconSlot $w={s(22)} aria-label="Links"><Lines kind="left" /></IconSlot>
                <IconSlot $w={s(22)} aria-label="Centreren"><Lines kind="center" /></IconSlot>
                <IconSlot $w={s(22)} aria-label="Rechts"><Lines kind="right" /></IconSlot>
                <Slot $w={s(9)}><Bar /></Slot>
                <IconSlot $w={s(22)} aria-label="Minder inspringen"><Indent back /></IconSlot>
                <IconSlot $w={s(22)} aria-label="Meer inspringen"><Indent /></IconSlot>
              </ToolRow>
            </Column>
            <Tall><Slot $w={s(8)}><Bar $dark /></Slot></Tall>
            <Column>
              <ToolRow $pad={3}><TextTool $w={s(140)}><Wrap />Tekstterugloop</TextTool></ToolRow>
              <ToolRow $pad={3}><TextTool $w={s(173)}><Merge />Samenvoegen en centreren</TextTool><Slot $w={5}><Caret /></Slot></ToolRow>
            </Column>
          </Halves>
          <ToolName><span>Uitlijning</span><Launcher /></ToolName>
        </ToolGroup>
        <ToolGroup $w={s(140)}>
          <ToolRow $pad={4}><Pick $w={s(131)}><select aria-label="Getalnotatie"><option>Standaard</option></select><Caret /></Pick></ToolRow>
          <ToolRow $pad={4}>
            <IconSlot $w={s(22)} aria-label="Valuta"><Money /></IconSlot>
            <Slot $w={s(11)}><Caret /></Slot>
            <IconSlot $w={s(24)}><Percent>%</Percent></IconSlot>
            <IconSlot $w={s(20)}><Zeros>000</Zeros></IconSlot>
            <Slot $w={s(8)}><Bar /></Slot>
            {!wide && <IconSlot $w={24}><Decimals><span><u>←</u>,0</span><span>,00</span></Decimals></IconSlot>}
            {!wide && <IconSlot $w={22}><Decimals><span>,00</span><span><u>→</u>,0</span></Decimals></IconSlot>}
          </ToolRow>
          <ToolName><span>Getal</span><Launcher /></ToolName>
        </ToolGroup>
        {!wide && (
          <>
            <ToolGroup $w={207}>
              <Halves>
                <Stacked $w={94}><Conditional /><span>Voorwaardelijke</span><span>opmaak <Caret /></span></Stacked>
                <Stacked $w={52}><FormatTable /><span>Opmaken</span><span>als tabel <Caret /></span></Stacked>
                <Stacked $w={58}><CellStyles /><span>Celstijlen</span><span><Caret /></span></Stacked>
              </Halves>
              <ToolName><span>Stijlen</span></ToolName>
            </ToolGroup>
            <ToolGroup $w={200}>
              <Halves>
                <Stacked $w={60}><InsertCells /><span>Invoegen</span><span><Caret /></span></Stacked>
                <Stacked $w={60}><InsertCells /><span>Verwijderen</span><span><Caret /></span></Stacked>
              </Halves>
            </ToolGroup>
          </>
        )}
      </Tools>
      <FormulaBar $wide={wide}>
        <Field $w={s(102)}><input aria-label="Naamvak" defaultValue={cell} /><Glyph w={7} h={4}><path d="M0 0h7L3.500 4z" fill={ink} stroke="none" /></Glyph></Field>
        <Slot $w={s(30)}><Glyph w={2} h={11}><path d="M1 0v11" stroke="#eee" strokeWidth="2" strokeDasharray="2 2" /></Glyph></Slot>
        <Field $w={s(110)}>
          <IconSlot $w={s(36)} aria-label="Annuleren"><Glyph w={11} h={11}><path d="M1 1l9 9M10 1l-9 9" stroke="#868686" strokeWidth="2" /></Glyph></IconSlot>
          <IconSlot $w={s(36)} aria-label="Invoeren"><Glyph w={13} h={11}><path d="M1 6l4 4 7-9" stroke="#868686" strokeWidth="2" /></Glyph></IconSlot>
          <IconSlot $w={s(36)}><Fx>fx</Fx></IconSlot>
        </Field>
        <FormulaInput aria-label="Formule" />
      </FormulaBar>
      <Grid $wide={wide}>
        <colgroup><col width={wide ? 27 : 26} />{widths.map((w, i) => <col key={i} width={w} />)}<col /></colgroup>
        <thead>
          <tr>
            <th><Corner><path d="M9 0v9H0z" fill="#e6e6e6" /></Corner></th>
            {letters.map((l, i) => <th key={i} className={l === active ? 'on' : undefined}>{l}</th>)}
          </tr>
        </thead>
        <tbody>
          {Array.from({ length: rows }, (_, r) => (
            <tr key={r}>
              <th className={r + 1 === activeRow ? 'on' : undefined}>{r + 1}</th>
              {letters.map((_l, c) => {
                if (r === 0 && c < 4) {
                  return (
                    <HeadCell key={c} $ants={!wide && c === 1}>
                      <div>{heads[c]}<button aria-label="Filter"><Glyph w={7} h={4}><path d="M0 0h7L3.500 4z" fill="#555" stroke="none" /></Glyph></button></div>
                    </HeadCell>
                  );
                }
                if (r === 1 && c < 4) {
                  return <TagCell key={c} $grey={c === 0} $flag={c === 1} $corner={c === 3}>{['Productcode', '00000428', tags, ''][c]}</TagCell>;
                }
                return <td key={c} />;
              })}
            </tr>
          ))}
        </tbody>
      </Grid>
      {children}
    </SheetWindow>
  );
}

/* ---------- product detail windows ---------- */

const Detail = styled.section<{ $second?: boolean }>`
  position: absolute; overflow: hidden; padding-left: 6px; background: #b9cfe4; border-left: 1px solid #8c9db0; border-top: 1px solid #7f95ab;
  ${p => (p.$second ? css`left: 589px; top: 807px; width: 561px; bottom: 0;` : css`left: 73px; top: 811px; width: 511px; height: 327px;`)}
`;
const DetailTitle = styled.header<{ $second?: boolean }>`
  display: flex; align-items: center; gap: 4px; height: ${p => (p.$second ? 28 : 29)}px; margin-left: -6px; padding-left: 5px;
  background: linear-gradient(#a0b9d2, #d6e2ee);
  h2 { margin: 0; font: bold 13px ${tahoma}; color: #000; }
`;
const DetailBody = styled.div`background: #f0f0f0; min-height: 310px; border-left: 1px solid #9da5ae;`;
const Tabs = styled.div`display: flex; align-items: flex-end; height: 32px; padding-left: 7px;`;
const Tab = styled.button<{ $w: number; $on?: boolean }>`
  flex: none; width: ${p => p.$w}px; height: 20px; white-space: nowrap; text-align: center; color: #000; margin-right: -1px;
  border: 1px solid #80858c; background: linear-gradient(#ededed, #d6d6d6); overflow: hidden;
  ${p => p.$on && css`height: 25px; background: #fcfcfc; border-bottom-color: #fcfcfc; padding-bottom: 2px;`}
`;
const TabPanel = styled.div`margin: -1px 0 0 7px; padding: 13px 0 0 7px; border: solid #80858c; border-width: 1px 0 0 1px; background: #fcfcfc; min-height: 250px;`;
const Box = styled.fieldset`
  margin: 0; padding: 4px 0 0 4px; border: 1px solid #dcdcdc; border-right: 0; min-width: 0; height: 240px;
  legend { margin-left: 4px; padding: 0 4px; line-height: 13px; color: #777; }
`;
const Pair = styled.div`display: flex; gap: 4px;`;
const Actions = styled.div`flex: none; display: grid; grid-auto-rows: 23px; row-gap: 1px; width: 100px;`;
const Action = styled.button`
  display: flex; align-items: center; gap: 4px; padding: 2px 0 0 3px; color: #747474; border: 1px solid #6d6d6d;
  background: linear-gradient(#ececec, #dadada); box-shadow: inset 0 0 0 1px #f2f2f2;
  svg { margin-top: -2px; }
  &:disabled { color: #a3a3a3; border-color: #b4b4b4; }
`;
const TagTable = styled(DataTable)`
  width: 700px;
  tbody tr:last-child td { border-bottom-color: #8b8f96; }
`;
const Frame = styled.div`flex: none; border-left: 1px solid #8b8f96; margin-left: -1px; height: 200px;`;

function DetailWindow({ second, tags, selected }: { second?: boolean; tags: string[]; selected?: number }) {
  const off = !second;
  return (
    <Detail $second={second}>
      <DetailTitle $second={second}><Blocks size={16} /><h2>Producten</h2><Smudge w={second ? 464 : 412} h={20} seed={second ? 71 : 72} loose={0.03} /></DetailTitle>
      <DetailBody>
        <RibbonBar>
          <RibbonGroup $w={65}><GroupBody><BigButton><Disk />Opslaan</BigButton></GroupBody><GroupName>Acties</GroupName></RibbonGroup>
          <RibbonGroup $w={186}>
            <GroupBody>
              <BigButton><Disk badge="up" />Upload</BigButton>
              <BigButton disabled><Disk badge="down" faded />Download</BigButton>
              <BigButton disabled><Bin faded />Verwijderen</BigButton>
            </GroupBody>
            <GroupName>Productsheet</GroupName>
          </RibbonGroup>
          <RibbonGroup $w={186}>
            <GroupBody>
              <BigButton><Store />Historie</BigButton>
              <BigButton><Store />{'Inkoop\norders'}</BigButton>
              <BigButton><Printer />{'Label\nwachtrij'}</BigButton>
            </GroupBody>
            <GroupName>Voorraad</GroupName>
          </RibbonGroup>
          <RibbonGroup $w={186}>
            <GroupBody>
              <BigButton><Page />Facturen</BigButton>
              {second && <BigButton><Page />Consignatie</BigButton>}
            </GroupBody>
            <GroupName>{second ? 'Koppelingen' : ''}</GroupName>
          </RibbonGroup>
        </RibbonBar>
        <Tabs role="tablist">
          <Tab $w={61} role="tab">Informatie</Tab>
          <Tab $w={81} role="tab">Prijzen</Tab>
          <Tab $w={61} role="tab">Details</Tab>
          <Tab $w={71} role="tab">Instellingen</Tab>
          <Tab $w={51} role="tab">CMS</Tab>
          <Tab $w={71} role="tab" $on aria-selected="true">Kenmerken</Tab>
          <Tab $w={91} role="tab">Serienummers</Tab>
          <Tab $w={74} role="tab">Leverancier</Tab>
        </Tabs>
        <TabPanel>
          <Box>
            <legend>Wat voor kenmerken horen bij dit product?</legend>
            <Pair>
              <Actions>
                <Action><Plus size={16} />Toevoegen</Action>
                <Action disabled={off}><Pencil size={16} />Bewerken</Action>
                <Action disabled={off}><Bin size={16} />Verwijderen</Action>
                <Action disabled={off}><Scribble size={16} />Records</Action>
                <Action><XlPage size={16} />Exporteer</Action>
              </Actions>
              <Frame>
                <TagTable>
                  <colgroup><col width={201} /><col width={200} /><col /></colgroup>
                  <thead><tr><th>Hoofd kenmerk</th><th>Naam</th><th>{second ? 'Sortering' : ''}</th></tr></thead>
                  <tbody>
                    {tags.map((t, i) => <tr key={i} className={i === selected ? 'on' : undefined}><td /><td>{t}</td><td /></tr>)}
                  </tbody>
                </TagTable>
              </Frame>
            </Pair>
          </Box>
        </TabPanel>
      </DetailBody>
    </Detail>
  );
}

/* ---------- tutorial marks ---------- */

const Mark = styled.div<{ $x: number; $y: number; $w: number; $h: number }>`
  position: absolute; left: ${p => p.$x}px; top: ${p => p.$y}px; width: ${p => p.$w}px; height: ${p => p.$h}px; border: 2px solid #000; pointer-events: none;
`;
const Step = styled.strong<{ $x: number; $y: number }>`
  position: absolute; left: ${p => p.$x}px; top: ${p => p.$y}px; font: bold 20px/24px Lato, Calibri, sans-serif; color: #5a00ff; white-space: nowrap;
`;

export default function App() {
  return (
    <>
      <Global />
      <Desktop>
        <BackWindow />
        <Sheet
          file="Producten_export_10-2-2017_12-12-13.xlsx" titleGap={406} cell="E11" active="E" activeRow={11} rows={23}
          letters={['B', 'C', 'D', 'E', 'F', 'G', 'H', 'I', 'J', 'K', '']} widths={[107, 107, 300, 112, 64, 64, 64, 64, 64, 64]}
          tags="kinder;bloem; Lengtecollier;wit;Lengtecollier;dieren"
        >
          <PasteOptions><Paste small />(Ctrl)<Caret /></PasteOptions>
        </Sheet>
        <Sheet
          wide file="test.xlsx" titleGap={538} cell="D13" active="D" rows={4}
          letters={['A', 'B', 'C', 'D', 'E']} widths={[116, 115, 354, 120, 69]}
          tags="kinder;bloem; Lengtecollier;wit;Lengtecollier;dieren;zilver"
        />
        <DetailWindow tags={['Lengtecollier', 'kinder', 'dieren', 'wit', 'Lengtecollier', 'bloem']} />
        <DetailWindow second selected={3} tags={['Lengtecollier', 'kinder', 'dieren', 'wit', 'Lengtecollier', 'bloem', 'zilver']} />
        <Mark $x={744} $y={42} $w={166} $h={44} />
        <Step $x={772} $y={20}>stap 1</Step>
        <Mark $x={331} $y={411} $w={486} $h={65} />
        <Step $x={475} $y={416}>stap 2</Step>
        <Mark $x={915} $y={712} $w={88} $h={54} />
        <Step $x={938} $y={743}>stap 4</Step>
        <Mark $x={371} $y={1005} $w={148} $h={124} />
        <Step $x={314} $y={966}>stap 0 (al bestaande)</Step>
        <Mark $x={884} $y={1121} $w={144} $h={23} />
        <Step $x={854} $y={964}>stap 5 (+nieuwe)</Step>
      </Desktop>
    </>
  );
}
